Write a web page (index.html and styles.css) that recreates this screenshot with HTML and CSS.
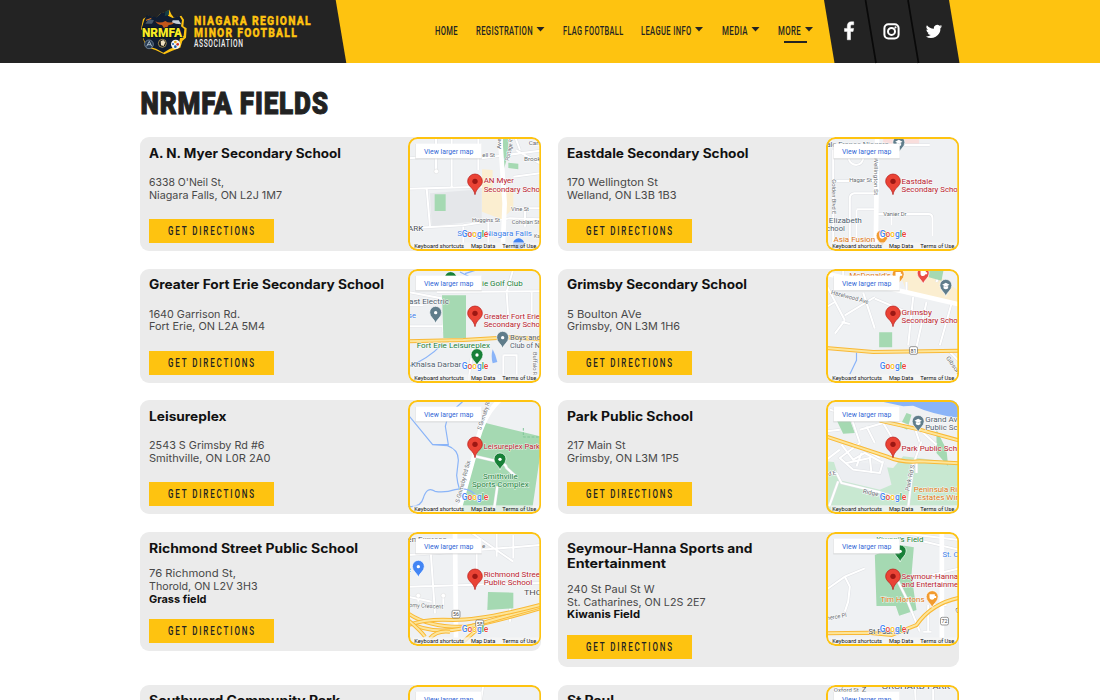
FILE: index.html
```html
<!DOCTYPE html>
<html lang="en">
<head>
<meta charset="utf-8">
<title>NRMFA Fields</title>
<link rel="stylesheet" href="styles.css">
</head>
<body>
<header class="site-header">
  <a class="brand" href="#">
    <svg class="crest" viewBox="0 0 138 135" width="46" height="45">
      <path d="M24 20 50 26 60 14 78 8 88 2 94 16 102 26 124 20 132 32 130 52 140 58 138 86 127 96 121 116 95 126 73 136 48 124 20 114 10 92 12 70 3 60 9 30Z" fill="#fdc210"/>
      <path d="M20 18 50 25 62 13 86 5 84 20 98 27 118 20 126 34 123 52 133 60 131 80 120 88 115 111 90 119 70 131 48 119 20 110 11 90 14 67 5 58 13 32Z" fill="#101c30"/>
      <path d="M46 37q14 8 30-1 12 9 30 1-6 11-20 11l-6 10h-8l-6-10Q52 48 46 37Z" fill="#c2571b"/>
      <path d="M76 8 88 2 86 18 74 22Z" fill="#163f45"/>
      <path d="M98 34h18l8 12-16-2-12-4Z" fill="#c4ced8"/><path d="M26 30 42 34 36 44 16 44Z" fill="#46566a"/>
      <path d="M18 34 34 28" stroke="#e57b20" stroke-width="3"/>
      <text x="6" y="85" class="crest-name" textLength="120" lengthAdjust="spacingAndGlyphs">NRMFA</text>
      <circle cx="27" cy="106" r="13" fill="#26384e" stroke="#8ea2b4" stroke-width="2"/><path d="m20 112 8-15 7 15M22 107h10" fill="none" stroke="#a8bbc9" stroke-width="3"/>
      <circle cx="67" cy="103" r="12" fill="#161616" stroke="#d8bd6f" stroke-width="2"/><path d="m62 97 8-4 6 7-5 11-8-2Z" fill="#eee0c0"/>
      <circle cx="107" cy="106" r="14" fill="#f3f3f3"/><circle cx="106" cy="99" r="4" fill="#e8ad18"/><circle cx="113" cy="106" r="4" fill="#d33025"/><circle cx="106" cy="113" r="4" fill="#1c5fac"/><circle cx="99" cy="105" r="3" fill="#1c5fac"/>
    </svg>
    <svg class="wordmark" width="120" height="36" viewBox="0 0 120 36">
      <text class="wm-strong" x="0" y="11.300" textLength="118" lengthAdjust="spacingAndGlyphs">NIAGARA REGIONAL</text>
      <text class="wm-strong" x="0" y="22.500" textLength="104" lengthAdjust="spacingAndGlyphs">MINOR FOOTBALL</text>
      <text class="wm-light" x="0" y="33" textLength="49.500" lengthAdjust="spacingAndGlyphs">ASSOCIATION</text>
    </svg>
  </a>
  <nav class="main-nav">
    <a href="#"><svg width="22" height="14"><text y="11.800" textLength="23" lengthAdjust="spacingAndGlyphs">HOME</text></svg></a>
    <a href="#"><svg width="68" height="14"><text y="11.800" textLength="57" lengthAdjust="spacingAndGlyphs">REGISTRATION</text><path d="M60.500 4h8l-4 4.500Z"/></svg></a>
    <a href="#"><svg width="60" height="14"><text y="11.800" textLength="60.500" lengthAdjust="spacingAndGlyphs">FLAG FOOTBALL</text></svg></a>
    <a href="#"><svg width="62" height="14"><text y="11.800" textLength="50.500" lengthAdjust="spacingAndGlyphs">LEAGUE INFO</text><path d="M54 4h8l-4 4.500Z"/></svg></a>
    <a href="#"><svg width="37" height="14"><text y="11.800" textLength="26" lengthAdjust="spacingAndGlyphs">MEDIA</text><path d="M29.500 4h8l-4 4.500Z"/></svg></a>
    <a class="current" href="#"><svg width="35" height="14"><text y="11.800" textLength="23" lengthAdjust="spacingAndGlyphs">MORE</text><path d="M27 4h8l-4 4.500Z"/></svg></a>
  </nav>
  <div class="social">
    <svg width="136" height="63" viewBox="0 0 136 63">
      <path d="M0 0h125l10.500 63h-125Z" fill="#232323"/>
      <path d="m41.500 0 10.500 63M84 0l10.500 63" stroke="#090909" stroke-width="1.700"/>
      <path d="M9.200 0v3H7.500C6.400 3 6 3.600 6 4.600v2h3.100l-.5 3H6V18H2.800V9.600H0v-3h2.800V4.200C2.800 1.500 4.400 0 6.800 0Z" transform="translate(20.500 21.800)" fill="#fff" stroke="#fff" stroke-width=".5"/>
      <g fill="none" stroke="#fff" stroke-width="2"><rect x="60.400" y="24.300" width="14.200" height="14.200" rx="4"/><circle cx="67.500" cy="31.400" r="3.500"/></g><circle cx="71.500" cy="27.400" r="1.100" fill="#fff"/>
      <path transform="translate(101.800 23.200) scale(.68)" fill="#fff" d="M24 4.560a9.800 9.800 0 0 1-2.830.78 4.900 4.900 0 0 0 2.170-2.730 9.900 9.900 0 0 1-3.130 1.200 4.920 4.920 0 0 0-8.380 4.480A14 14 0 0 1 1.670 3.150a4.930 4.930 0 0 0 1.520 6.570 4.900 4.900 0 0 1-2.230-.61 4.930 4.930 0 0 0 3.950 4.890 4.900 4.900 0 0 1-2.220.08 4.930 4.930 0 0 0 4.600 3.420A9.900 9.900 0 0 1 0 19.540a14 14 0 0 0 21.540-12.420A10 10 0 0 0 24 4.560Z"/>
    </svg>
  </div>
</header>
<main class="page">
  <h1 class="page-title"><svg width="190" height="30"><text x="0.500" y="25.500" textLength="188.500" lengthAdjust="spacingAndGlyphs">NRMFA FIELDS</text></svg></h1>
  <section class="fields" id="fields"></section>
</main>
<script src="fields.js"></script>
</body>
</html>
```

FILE: styles.css
```css
* { box-sizing: border-box; }
body { margin: 0; background: #fff; font-family: Inter, "Open Sans", sans-serif; overflow: hidden; height: 700px; }
svg { display: block; }
a { color: inherit; text-decoration: none; }

.site-header { position: relative; height: 63px; background: #fec310; display: flex; }
.brand { width: 347px; height: 63px; background: #232323; clip-path: polygon(0 0, 335.700px 0, 346.300px 100%, 0 100%); display: flex; padding: 9px 0 0 140px; flex: none; }
.crest { overflow: visible; }
.crest-name { font: 900 41px Roboto, sans-serif; fill: #f6ec25; stroke: #07101f; stroke-width: 5px; paint-order: stroke; }
.wordmark { margin: 5px 0 0 8px; overflow: visible; }
.wm-strong { font: 900 12.400px Roboto, sans-serif; letter-spacing: 1.500px; fill: #fdc210; stroke: #fdc210; stroke-width: .3px; }
.wm-light { font: 500 10.300px Roboto, sans-serif; letter-spacing: 1px; fill: #f1f1f1; }
.main-nav { display: flex; gap: 18.700px; padding: 23.300px 0 0 88.300px; }
.main-nav svg { overflow: visible; fill: #232323; }
.main-nav text { font: 500 13.200px Roboto, sans-serif; letter-spacing: .6px; }
.main-nav .current::after { content: ""; display: block; width: 23px; height: 2px; margin: 3.700px 0 0 6px; background: #232323; }
.social { margin-left: 11.500px; }
.social svg { overflow: visible; }

.page { width: 819px; height: 637px; overflow: hidden; margin-left: 140.330px; }
.page-title { margin: 0; padding-top: 25px; height: 74px; }
.page-title svg { overflow: visible; }
.page-title text { font: 900 30.500px Roboto, sans-serif; fill: #222; stroke: #222; stroke-width: 1px; letter-spacing: 1px; }
.fields { display: grid; grid-template-columns: 401px 401px; gap: 17.700px 17px; align-items: start; }
.field { display: flex; min-height: 114px; background: #ebebeb; border-radius: 9px; }
.info { flex: 1; display: flex; flex-direction: column; justify-content: space-between; align-items: flex-start; padding: 8.500px 0 8px 8.670px; }
.name { margin: 0 0 12.200px; font-size: 12.800px; line-height: 15.500px; font-weight: 700; color: #111; white-space: nowrap; }
.address { margin: 0 0 12.800px; font-size: 10.700px; line-height: 12.800px; color: #484848; white-space: nowrap; }
.line { display: block; width: max-content; transform-origin: 0 50%; }
.address .strong { font-weight: 700; color: #111; }
.directions { width: 125px; height: 24px; background: #fec310; }
.directions svg { overflow: visible; }
.directions text { font: 500 12.900px Roboto, sans-serif; letter-spacing: 3px; fill: #222; }
.map { flex: none; width: 133.330px; height: 114px; border-radius: 9px; overflow: hidden; }

.map text { font-family: Roboto, sans-serif; }
.map .poi { font-size: 24px; paint-order: stroke; stroke: #fff; stroke-width: 3px; stroke-opacity: .8; }
.map .st { font-size: 18px; fill: #666b70; paint-order: stroke; stroke: #fff; stroke-width: 3px; }
.map .red { fill: #b8202c; }
.map .blue { fill: #3c7ee8; }
.map .green { fill: #188038; }
.map .slate { fill: #50616e; }
.map .orange { fill: #dd7510; }
.map .dark { fill: #4b4f53; }
.map .view { font-size: 21px; fill: #3367d6; }
.map .legal { font-size: 17.500px; fill: #111; }
.map .google { font-size: 27px; font-weight: 500; paint-order: stroke; stroke: #fff; stroke-width: 3px; }
.map .road { fill: none; stroke: #fff; stroke-width: 6px; }
.map .edge { fill: none; stroke: #dfe1e5; stroke-width: 9px; }
.map .wide { fill: none; stroke: #fff; stroke-width: 14px; }
.map .hw-edge { fill: none; stroke: #f9b936; stroke-width: 12px; }
.map .hw { fill: none; stroke: #fde59a; stroke-width: 6px; }
.map .river { fill: none; stroke: #8ab4f8; stroke-width: 3.500px; }
.map .park { fill: #a5d9b2; }
```

FILE: fields.js
```js
// Map drawings use three units per CSS pixel.
const road = d => `<path class="edge" d="${d}"/><path class="road" d="${d}"/>`;
const wide = d => `<path class="wide" d="${d}"/>`;
const highway = d => `<path class="hw-edge" d="${d}"/><path class="hw" d="${d}"/>`;
const river = d => `<path class="river" d="${d}"/>`;
const park = d => `<path class="park" d="${d}"/>`;
const label = (x, y, w, cls, s, extra = '') => `<text x="${x}" y="${y}" class="${cls}" textLength="${w}" lengthAdjust="spacingAndGlyphs" ${extra}>${s}</text>`;
const poi = (x, y, w, c, s) => label(x, y, w, 'poi ' + c, s);
const street = (x, y, w, s, r = 0) => label(x, y, w, 'st', s, r ? `transform="rotate(${r} ${x} ${y})"` : '');
const marker = (x, y, color, inner = '<circle r="5" cy="-32" fill="#fff"/>') => `<g transform="translate(${x} ${y})"><path d="M0 0C-3-13-18-18-18-33a18 18 0 0 1 36 0C18-18 3-13 0 0Z" fill="${color}" stroke="#fff" stroke-width="2"/>${inner}</g>`;
const cap = '<path d="m-11-35 11-6 11 6-11 6ZM-7-30v6q7 5 14 0v-6" fill="#fff"/>';
const cup = '<path d="M-8-40H8v5h4v6H7q-2 5-7 5-8 0-8-7Z" fill="#fff"/>';
const shield = (x, y, n) => `<rect x="${x - 12}" y="${y - 12}" width="24" height="23" rx="5" fill="#fff" stroke="#666" stroke-width="2"/><text x="${x}" y="${y + 6}" font-size="16" text-anchor="middle" fill="#444">${n}</text>`;

const maps = {
  myer: road('M24 85 175 75M155 20V175M24 176 250 170M80 176 90 290M24 295 190 286 330 265 420 268M235 20V120M245 85 420 62M108 20V125M348 60 420 100M340 140 420 130M420 235H330M375 240V290M345 20 360 60M190 290V340M265 270V340') +
    '<path d="M90 190 245 178V272L95 288Z" fill="#e5e7ea"/><path d="M246 118 278 120V178H340V235L305 268 246 245Z" fill="#fbeed0"/>' +
    park('M104 193H137V243H104ZM309 20H325V72L308 130ZM325 98 355 101V118L325 114Z') + wide('M300 20 314 220 308 360') + '<circle cx="109" cy="124" r="7" fill="#fff" stroke="#ccc"/>' +
    street(304, 57, 32, 'Ave', -90) + street(328, 93, 65, 'Portage R', -80) + street(386, 44, 36, 'Carr') + street(372, 94, 50, 'Brook') + street(247, 81, 38, 'ell St') + street(333, 244, 54, 'Vine St') + street(216, 277, 84, 'Huggins St') + street(335, 282, 84, 'Coholan St') +
    poi(24, 303, 46, 'dark', 'ARK') + poi(172, 318, 224, 'blue', 'Sobeys Niagara Falls') + '<circle cx="356" cy="342" r="17" fill="#4285f4"/>' + street(402, 325, 18, 'Ka') +
    poi(251, 160, 91, 'red', 'AN Myer') + poi(251, 185, 169, 'red', 'Secondary Scho'),
  eastdale: '<path d="M190 20H298V44H190Z" fill="#f9dedc"/>' + road('M40 60V340M86 85C92 112 132 112 130 80M40 153H168M90 335V205Q90 192 103 190H165M110 240V340M110 238H165M175 252H325Q338 252 338 265V318M215 252V285M245 45H330M130 90V60') + wide('M172 20 168 340') +
    poi(20, 51, 187, 'slate', 'ale France Niagara') + marker(237, 70, '#607d8b', cap) + street(88, 157, 68, 'Hagar St') + street(190, 257, 70, 'Vanier Dr') + street(163, 82, 113, 'Wellington St', 90) + street(36, 148, 105, 'Golden Blvd E', 90) +
    poi(27, 279, 99, 'slate', 'Elizabeth') + poi(19, 302, 56, 'slate', 'chool') + marker(187, 350, '#f29b2e', cup) + poi(41, 335, 125, 'orange', 'Asia Fusion') +
    poi(245, 162, 93, 'red', 'Eastdale') + poi(245, 186, 169, 'red', 'Secondary Scho'),
  forterie: road('M24 90 130 110V210M24 193H130M110 90 420 88M340 20 320 90 325 170M220 245 205 360M310 280H350V340M310 280V340M395 90V190M24 130H70') + park('M126 100H198V228H130Z') + highway('M24 238 190 234 330 226 420 232') + river('M24 315Q85 290 125 248M180 30 210 45M195 35 225 25') + '<path d="M278 262q-6 22 0 42l14-4q-4-20-14-38Z" fill="#8ab4f8"/>' +
    marker(152, 80, '#188038') + poi(246, 71, 122, 'green', 'ie Golf Club') + poi(27, 126, 120, 'slate', 'ast Electric') + poi(24, 168, 24, 'blue', 'se') + marker(107, 184, '#607d8b') + marker(308, 259, '#607d8b') +
    poi(330, 233, 92, 'slate', 'Boys and') + poi(330, 257, 90, 'slate', 'Club of N') + poi(50, 257, 220, 'green', 'Fort Erie Leisureplex') + marker(231, 311, '#188038') + poi(33, 315, 151, 'slate', 'Khalsa Darbar') + street(399, 270, 70, 'Buffalo R', 90) +
    poi(251, 171, 169, 'red', 'Greater Fort Erie') + poi(251, 195, 169, 'red', 'Secondary Scho'),
  grimsby: '<path d="M235 20H330L420 90V135L260 90Z" fill="#fbeed0"/>' + road('M20 70 75 175M45 120 20 135M75 175 45 215M65 180 90 186M130 92 165 200M75 160 165 105M165 110 260 150M280 105 265 250M320 120 290 255M395 125 360 250M385 265 420 300M350 60 365 20M260 95V60M70 20V60') + park('M327 20H372L365 56 327 46ZM178 211H217V256H178Z') + wide('M20 35 420 128') + highway('M18 258 160 270 420 266') + river('M110 272V295L90 337') +
    poi(88, 49, 125, 'orange', "McDonald's") + marker(235, 70, '#f29b2e', cup) + marker(310, 66, '#e94b45', cup) + marker(378, 103, '#607d8b', cap) + street(33, 96, 115, 'Hazelwood Ave', 15) + street(378, 288, 60, 'Gibson', 55) + shield(281, 266, '81') +
    poi(245, 159, 91, 'red', 'Grimsby') + poi(245, 184, 169, 'red', 'Secondary Scho'),
  leisure: park('M248 88 420 130V190L395 360H178Z') + wide('M300 20Q240 75 222 190L175 360') + road('M225 190 290 205Q315 208 320 225L345 248M292 280 282 350') + river('M24 65 98 155 142 158Q176 170 175 203L170 247Q174 292 195 320M98 155 145 155 136 100 145 65 190 24M24 340Q62 345 70 315Q81 278 105 295Q134 300 165 290Q220 277 240 330') +
    '<path d="M370 105V132H420" stroke="#7fc59a" stroke-width="3" stroke-dasharray="8 5" fill="none"/>' + street(243, 112, 95, 'S Grimsby Rd', -72) + street(178, 330, 130, 'S Grimsby Rd Six', -75) + marker(300, 231, '#188038') + poi(249, 257, 104, 'green', 'Smithville') + poi(216, 281, 170, 'green', 'Sports Complex') + poi(251, 169, 169, 'red', 'Leisureplex Park'),
  park: '<path d="M18 205 220 225 250 190 420 210V360H18Z" fill="#c8e8d1"/><path d="M40 200 200 215 215 275 180 290 60 262Z" fill="#eceef1"/>' + park('M50 80H90L105 120 70 122ZM240 100 260 60 275 65 262 110ZM350 110 380 170 385 220 350 180Z') + '<path d="M150 18H420V75Q340 65 280 38L250 40Z" fill="#8ab4f8"/>' +
    road('M90 60 120 150 60 195 100 230 180 240 190 205M65 155 100 200 135 180 190 210M120 110 190 90 220 140M100 150 180 195M140 100 165 150M220 80 290 110 340 120M280 90 300 150M20 200 60 170M290 210V240M20 115 60 110M300 110 350 155M80 210 150 195 155 240M110 220 125 180') +
    road('M50 240 65 270 180 298 230 315M55 265 28 340M305 145 280 215 265 345M20 240H50M30 50 75 65') + highway('M180 83 300 110 420 143') + highway('M18 130 200 190Q245 210 300 205L420 211') + marker(295, 118, '#607d8b', cap) +
    poi(316, 87, 97, 'slate', 'Grand Av') + poi(316, 110, 97, 'slate', 'Public Sc') + street(20, 250, 30, 'rd E', -10) + street(268, 295, 80, 'Park Rd S', -78) + street(128, 300, 75, 'Ridge Rd', 12) + poi(282, 298, 130, 'orange', 'Peninsula Ri') + poi(293, 321, 122, 'orange', 'Estates Wir') + poi(245, 174, 167, 'red', 'Park Public Sch'),
  richmond: road('M24 90 110 85 300 70 420 60M90 50 105 265M24 185 420 174M230 85V175M290 20V95M210 20 340 110M340 30V100M24 215 95 230M55 230V210M130 245V210M330 210V290') + wide('M165 20 168 340') + park('M264 201 340 203V250L262 255Z') +
    highway('M24 265Q90 310 200 305Q270 295 420 250') + highway('M24 290Q90 330 190 310L420 245') + highway('M24 300Q80 280 160 285 250 285 420 240') + highway('M90 340Q110 315 150 320M24 285Q60 315 75 335M190 350 240 305') + '<circle cx="55" cy="212" r="7" fill="#fff" stroke="#ccc"/><circle cx="130" cy="212" r="7" fill="#fff" stroke="#ccc"/>' +
    poi(22, 51, 118, 'dark', 'en Express') + marker(55, 157, '#4285f4') + poi(18, 142, 15, 'blue', 'e') + street(246, 70, 10, 'e') + street(27, 246, 103, 'omy Crescent', 3) + shield(168, 268, '56') + shield(239, 297, '58') + poi(372, 210, 54, 'dark', 'THO') + poi(251, 157, 169, 'red', 'Richmond Stree') + poi(251, 180, 146, 'red', 'Public School'),
  seymour: park('M165 90 240 60 282 67 275 150 290 255 238 272 228 243 170 243Z') + road('M18 195 75 155 135 130M75 155 90 185 85 230 75 260M270 40 420 75M325 240V320M310 320H335M420 130 335 150M210 20 420 45M380 240 340 240') + road('M235 170 260 220 300 320') + wide('M366 20V340') + highway('M18 325 145 323 215 330 290 300Q335 235 420 218') +
    poi(169, 52, 142, 'green', "Kiwani's Field") + marker(241, 111, '#188038') + poi(368, 97, 48, 'blue', 'St. C') + marker(337, 248, '#f29b2e', cup) + poi(182, 231, 132, 'orange', 'Tim Hortons') + shield(374, 289, '72') + street(22, 286, 60, 'nerce Pl', -10) + street(405, 250, 40, 'Gle', 65) + poi(146, 328, 122, 'dark', 'St Paul St W') + poi(245, 161, 170, 'red', 'Seymour-Hanna') + poi(245, 185, 170, 'red', 'and Entertainme'),
  southward: road('M250 20 235 120'),
  stpaul: road('M285 20 290 120M340 20V120') + street(42, 41, 75, 'Oxford St') + poi(126, 43, 14, 'dark', 'Z') + poi(186, 33, 205, 'dark', 'ORCHARD PARK'),
};

const furniture = `
  <rect x="46" y="42" width="199" height="46" fill="#bbb" opacity=".5"/><rect x="47" y="41" width="198" height="44" fill="#fff"/>
  <text class="view" x="72" y="72" textLength="148" lengthAdjust="spacingAndGlyphs">View larger map</text>
  <path d="M225 194C221 172 203 170 203 154a22 22 0 0 1 44 0C247 170 229 172 225 194Z" fill="#ea4335" stroke="#b31412" stroke-width="2"/><circle cx="225" cy="154" r="8" fill="#9c1713"/>
  <text class="google" x="185" y="322" textLength="80" lengthAdjust="spacingAndGlyphs"><tspan fill="#4285f4">G</tspan><tspan fill="#ea4335">o</tspan><tspan fill="#fbbc05">o</tspan><tspan fill="#4285f4">g</tspan><tspan fill="#34a853">l</tspan><tspan fill="#ea4335">e</tspan></text>
  <rect x="38" y="337" width="382" height="22" fill="#f5f5f5" opacity=".75"/>
  <text class="legal" x="43" y="353" textLength="149" lengthAdjust="spacingAndGlyphs">Keyboard shortcuts</text>
  <text class="legal" x="213" y="353" textLength="73" lengthAdjust="spacingAndGlyphs">Map Data</text>
  <text class="legal" x="307" y="353" textLength="102" lengthAdjust="spacingAndGlyphs">Terms of Use</text>
  <rect x="27" y="24" width="394" height="336" rx="25" fill="none" stroke="#fec310" stroke-width="6"/>`;

// Each line carries the width it is set to, in pixels.
const fields = [
  ['myer', [['A. N. Myer Secondary School', 192]], [["6338 O'Neil St,", 75], ['Niagara Falls, ON L2J 1M7', 133]]],
  ['eastdale', [['Eastdale Secondary School', 181.5]], [['170 Wellington St', 91], ['Welland, ON L3B 1B3', 109.5]]],
  ['forterie', [['Greater Fort Erie Secondary School', 235]], [['1640 Garrison Rd.', 91], ['Fort Erie, ON L2A 5M4', 116]]],
  ['grimsby', [['Grimsby Secondary School', 180]], [['5 Boulton AVe', 74.5], ['Grimsby, ON L3M 1H6', 113]]],
  ['leisure', [['Leisureplex', 77.5]], [['2543 S Grimsby Rd #6', 115.5], ['Smithville, ON L0R 2A0', 121.5]]],
  ['park', [['Park Public School', 126]], [['217 Main St', 58.5], ['Grimsby, ON L3M 1P5', 112]]],
  ['richmond', [['Richmond Street Public School', 209]], [['76 Richmond St,', 87], ['Thorold, ON L2V 3H3', 108.5], ['Grass field', 57.5, 1]]],
  ['seymour', [['Seymour-Hanna Sports and', 185.5], ['Entertainment', 99]], [['240 St Paul St W', 87.5], ['St. Catharines, ON L2S 2E7', 138.5], ['Kiwanis Field', 73, 1]]],
  ['southward', [['Southward Community Park', 191]], []],
  ['stpaul', [['St Paul', 47]], []],
];

const lines = list => list.map(([s, w, strong]) => `<span class="line${strong ? ' strong' : ''}" data-w="${w}">${s}</span>`).join('');
document.getElementById('fields').innerHTML = fields.map(([key, name, address], i) => {
  const dx = i % 2 ? -5.5 : 0;
  const box = `${24 + dx} 21 400 342`;
  return `<article class="field"><div class="info"><h2 class="name">${lines(name)}</h2>` + (address.length ? `<p class="address">${lines(address)}</p>
    <a class="directions" href="#"><svg width="125" height="24"><text x="19" y="16.200" textLength="88" lengthAdjust="spacingAndGlyphs">GET DIRECTIONS</text></svg></a>` : '') + `</div>
    <svg class="map" viewBox="${box}"><rect x="10" y="10" width="430" height="370" fill="#eff1f3"/>${maps[key]}<g transform="translate(${dx} 0)">${furniture}</g></svg></article>`;
}).join('');

document.querySelectorAll('[data-w]').forEach(el => {
  el.style.transform = `scaleX(${el.dataset.w / el.getBoundingClientRect().width})`;
});
```
